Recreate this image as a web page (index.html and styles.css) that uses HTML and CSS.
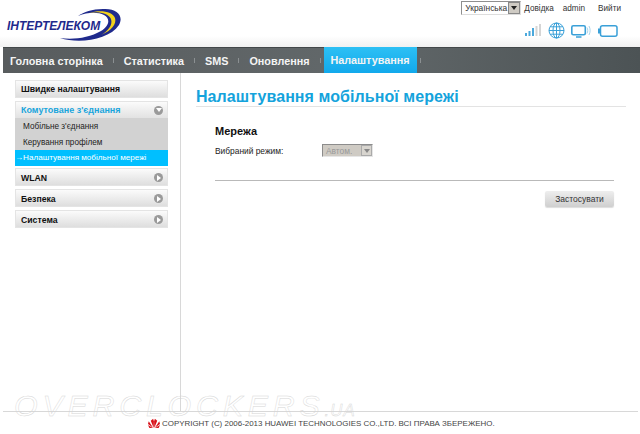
FILE: index.html
```html
<!DOCTYPE html>
<html lang="uk">
<head>
<meta charset="utf-8">
<title>Налаштування мобільної мережі</title>
<link rel="stylesheet" href="styles.css">
</head>
<body>
<div class="page">
  <header class="top">
    <div class="logo">
      <svg class="swoosh" width="64" height="34" viewBox="0 0 64 34">
        <path d="M1 30C20 36 50 32 60 17C65 8 58 0 44 1C33 1 25 4 19 8C29 4 39 4 45 7C52 11 50 18 42 23C30 30 14 32 1 30Z" fill="#1f2a8c"/>
        <path d="M30 5C40 3 50 6 52 11C54 17 49 23 42 27C52 23 58 16 56 10C54 4 42 1 30 5Z" fill="#f2d21b"/>
      </svg>
      <span class="logo-text">ІНТЕРТЕЛЕКОМ</span>
    </div>
    <div class="top-right">
      <div class="links">
        <span class="lang"><span class="lang-text">Українська</span><span class="lang-btn"><i class="down dark"></i></span></span>
        <span class="link">Довідка</span>
        <span class="link">admin</span>
        <span class="link link-last">Вийти</span>
      </div>
      <div class="status">
        <svg width="17" height="13" viewBox="0 0 17 13"><g fill="#4aa8dc"><rect x="0" y="9" width="2" height="3"/><rect x="3.500" y="7" width="2" height="5"/><rect x="7" y="4" width="2" height="8"/></g><g fill="#d5d5d5"><rect x="10.500" y="2" width="2" height="10"/><rect x="14" y="0" width="2" height="12"/></g></svg>
        <svg width="17" height="17" viewBox="0 0 17 17" fill="none" stroke="#3aa0d8" stroke-width="1"><circle cx="8.500" cy="8.500" r="7.500"/><ellipse cx="8.500" cy="8.500" rx="3.500" ry="7.500"/><path d="M8.500 1V16M1 8.500H16M2 4.800H15M2 12.200H15"/></svg>
        <svg width="20" height="14" viewBox="0 0 20 14" fill="none"><rect x="0.800" y="1.800" width="13.500" height="9" rx="1.500" stroke="#3aa0d8" stroke-width="1.600"/><path d="M5 13H10.500" stroke="#3aa0d8" stroke-width="1.500"/><path d="M16 3.500C17 5 17 8 16 9.500M18 2C19.500 5 19.500 8 18 11" stroke="#a9d3ea"/></svg>
        <svg class="battery" width="20" height="12" viewBox="0 0 20 12" fill="none"><rect x="2.500" y="0.800" width="16.500" height="10.400" rx="2" stroke="#3aa0d8" stroke-width="1.500"/><rect x="0" y="3.500" width="2" height="5" fill="#3aa0d8"/></svg>
      </div>
    </div>
  </header>

  <nav class="nav">
    <a class="tab">Головна сторінка</a><i class="sep"></i>
    <a class="tab">Статистика</a><i class="sep"></i>
    <a class="tab">SMS</a><i class="sep"></i>
    <a class="tab">Оновлення</a><i class="sep"></i>
    <a class="tab active">Налаштування</a><i class="sep"></i>
  </nav>

  <div class="main">
    <aside class="side">
      <div class="menu"><div class="menu-head"><span>Швидке налаштування</span></div></div>
      <div class="menu menu-open">
        <div class="menu-head open"><span>Комутоване з'єднання</span><i class="round"><i class="down"></i></i></div>
        <div class="sub">
          <div class="sub-item">Мобільне з'єднання</div>
          <div class="sub-item">Керування профілем</div>
          <div class="sub-item current">→Налаштування мобільної мережі</div>
        </div>
      </div>
      <div class="menu"><div class="menu-head"><span>WLAN</span><i class="round"><i class="right"></i></i></div></div>
      <div class="menu"><div class="menu-head"><span>Безпека</span><i class="round"><i class="right"></i></i></div></div>
      <div class="menu"><div class="menu-head"><span>Система</span><i class="round"><i class="right"></i></i></div></div>
    </aside>
    <section class="content">
      <h1 class="title">Налаштування мобільної мережі</h1>
      <div class="form">
        <h2 class="section">Мережа</h2>
        <div class="row">
          <span class="label">Вибраний режим:</span>
          <span class="select"><span class="select-text">Автом.</span><span class="select-btn"><i class="down grey"></i></span></span>
        </div>
        <div class="rule"></div>
        <div class="actions"><span class="btn">Застосувати</span></div>
      </div>
    </section>
  </div>

  <footer class="foot">
    <div class="copy">
      <svg width="12" height="11" viewBox="0 0 13 11"><g fill="#d8121b"><path d="M6.200 10.500L3 2.500L5.500 0.300L6.400 3Z"/><path d="M6.800 10.500L10 2.500L7.500 0.300L6.600 3Z"/><path d="M5.700 10.500L0.800 3L0 6Z"/><path d="M7.300 10.500L12.200 3L13 6Z"/><path d="M5.200 10.500L0 7L1.500 10.500Z"/><path d="M7.800 10.500L13 7L11.500 10.500Z"/></g></svg>
      <span>COPYRIGHT (C) 2006-2013 HUAWEI TECHNOLOGIES CO.,LTD. ВСІ ПРАВА ЗБЕРЕЖЕНО.</span>
    </div>
  </footer>
  <div class="mark">OVERCLOCKERS<small>.UA</small></div>
</div>
</body>
</html>
```
FILE: styles.css
```css
* { box-sizing: border-box; }
html, body { margin: 0; padding: 0; }
body { background: #fff; font-family: "Liberation Sans", Arial, sans-serif; color: #222; }
i { display: block; font-style: normal; }
.page { position: relative; width: 640px; height: 434px; overflow: hidden; }

.top { height: 47px; display: flex; justify-content: space-between; background: linear-gradient(#fff 0, #fff 36px, #f1f1f1 47px); }
.logo { position: relative; width: 130px; padding: 21px 0 0 7px; }
.logo-text { position: relative; font-size: 12px; font-weight: bold; font-style: italic; color: #1f2a8c; line-height: 11px; display: block; }
.swoosh { position: absolute; left: 59px; top: 8px; }
.top-right { display: flex; flex-direction: column; align-items: flex-end; padding: 1px 19px 0 0; }
.links { display: flex; align-items: center; height: 14px; font-size: 8.200px; color: #333; }
.lang { display: flex; align-items: center; width: 60px; height: 14px; border: 1px solid #8f8f8f; border-right-color: #ddd; border-bottom-color: #ddd; background: #fff; margin-right: 3px; }
.lang-text { flex: 1; padding-left: 3px; font-size: 8.400px; }
.lang-btn { width: 12px; height: 12px; background: #cfcbc4; border: 1px solid #888; display: flex; align-items: center; justify-content: center; }
.link { margin-left: 9px; }
.lang + .link { margin-left: 0; }
.link-last { margin-left: 13px; }
.status { display: flex; align-items: center; gap: 6px; margin-top: 7px; height: 17px; margin-right: 3px; }
.battery { margin-left: 1px; }

.down { width: 0; height: 0; border: 3px solid transparent; border-top: 4px solid #fff; border-bottom: 0; }
.down.dark { border-top-color: #222; }
.down.grey { border-top-color: #888; }
.right { width: 0; height: 0; border: 3px solid transparent; border-left: 4px solid #fff; border-right: 0; }

.nav { margin-left: 3px; height: 26px; padding-left: 7px; display: flex; align-items: stretch; background: linear-gradient(90deg, #585c5e, #62686a 55%, #4c5355); border-top: 1px solid #43484a; }
.tab { display: flex; align-items: center; font-size: 10.800px; font-weight: bold; color: #f4f4f4; }
.sep { width: 1px; height: 5px; background: #8b9092; align-self: center; margin: 0 10px; }
.tab.active { background: linear-gradient(#2dc0f4, #12a9ec); margin: -1px -7px 0; width: 93px; justify-content: center; }

.main { display: flex; height: 338px; }
.side { width: 181px; padding: 7px 12px 0 15px; border-right: 1px solid #d8d8d8; }
.menu { margin-bottom: 3px; width: 153px; border: 1px solid #e4e4e4; }
.menu-open { margin-bottom: 2px; }
.menu-head { height: 16px; display: flex; align-items: center; justify-content: space-between; padding: 0 4px 0 5px; background: linear-gradient(#fbfbfb, #dedede); font-size: 8.700px; font-weight: bold; color: #111; }
.menu-open ~ .menu .menu-head { padding-top: 1px; }
.menu-head.open { color: #1aa5dc; background: linear-gradient(#fbfbfb, #e2e2e2); font-size: 9px; }
.round { width: 9px; height: 9px; border-radius: 50%; background: #9a9a9a; display: flex; align-items: center; justify-content: center; }
.sub { background: #d2d2d2; margin: 0 -1px -1px; font-size: 8.200px; color: #222; }
.sub-item { height: 16px; line-height: 18px; padding-left: 8px; }
.sub-item.current { background: #00bfff; color: #fff; padding-left: 0; line-height: 16px; font-size: 8.100px; }

.content { flex: 1; padding: 14px 14px 0 15px; }
.title { margin: 0; height: 19px; font-size: 16px; line-height: 19px; font-weight: bold; color: #14a3dc; letter-spacing: 0.070px; }
.form { border-top: 1px solid #e3e3e3; padding: 17px 12px 0 19px; }
.section { margin: 0; font-size: 11px; line-height: 14px; font-weight: bold; color: #111; }
.row { display: flex; align-items: center; height: 13px; margin-top: 6px; font-size: 8.400px; color: #222; }
.label { width: 107px; }
.select { display: flex; align-items: center; width: 51px; height: 13px; background: #cfcbc4; border: 1px solid #8c8c8c; border-right-color: #e6e6e6; border-bottom-color: #e6e6e6; color: #999; }
.select-text { flex: 1; padding-left: 3px; }
.select-btn { width: 11px; height: 11px; background: #d8d5cf; border: 1px solid #aaa; display: flex; align-items: center; justify-content: center; }
.rule { height: 1px; background: #b9b9b9; margin-top: 23px; }
.actions { display: flex; justify-content: flex-end; margin-top: 10px; }
.btn { width: 69px; height: 16px; line-height: 16px; text-align: center; border-radius: 2px; background: linear-gradient(#eee, #cfcfcf); box-shadow: 0 1px 1px #ddd; font-size: 8.500px; color: #333; }

.foot { margin-left: 3px; margin-right: 2px; border-top: 1px solid #d8d8d8; height: 23px; }
.copy { display: flex; align-items: center; gap: 2px; margin: 6px 0 0 145px; font-size: 7.950px; color: #444; white-space: nowrap; }
.mark { position: absolute; left: 14px; top: 394px; height: 24px; font-size: 29px; line-height: 24px; font-style: italic; letter-spacing: 4.500px; color: transparent; -webkit-text-stroke: 0.400px #d5d5d5; white-space: nowrap; transform: scaleX(1.050); transform-origin: left; }
.mark small { font-size: 16px; line-height: 16px; letter-spacing: 1px; }
```
